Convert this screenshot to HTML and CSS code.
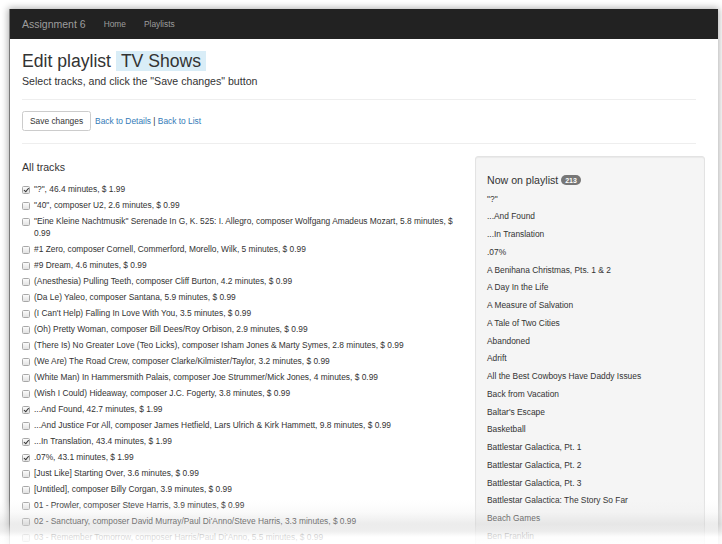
FILE: index.html
```html
<!DOCTYPE html>
<html>
<head>
<meta charset="utf-8">
<title>Edit playlist</title>
<link rel="stylesheet" href="styles.css">
</head>
<body>
<div class="frame">
  <nav class="navbar">
    <span class="brand">Assignment 6</span>
    <a class="nav-link" href="#">Home</a>
    <a class="nav-link" href="#">Playlists</a>
  </nav>
  <div class="container">
    <h2 class="title">Edit playlist <span class="hl">TV Shows</span></h2>
    <p class="sub">Select tracks, and click the "Save changes" button</p>
    <hr class="rule">
    <div class="actions">
      <button class="btn" type="button">Save changes</button>
      <span class="links"><a href="#">Back to Details</a> | <a href="#">Back to List</a></span>
    </div>
    <hr class="rule">
    <div class="row">
      <div class="col-main">
        <h4 class="heading">All tracks</h4>
        <ul class="tracks">
          <li><span class="cb checked"></span><span class="t">"?", 46.4 minutes, $ 1.99</span></li>
          <li><span class="cb"></span><span class="t">"40", composer U2, 2.6 minutes, $ 0.99</span></li>
          <li><span class="cb"></span><span class="t">"Eine Kleine Nachtmusik" Serenade In G, K. 525: I. Allegro, composer Wolfgang Amadeus Mozart, 5.8 minutes, $ 0.99</span></li>
          <li><span class="cb"></span><span class="t">#1 Zero, composer Cornell, Commerford, Morello, Wilk, 5 minutes, $ 0.99</span></li>
          <li><span class="cb"></span><span class="t">#9 Dream, 4.6 minutes, $ 0.99</span></li>
          <li><span class="cb"></span><span class="t">(Anesthesia) Pulling Teeth, composer Cliff Burton, 4.2 minutes, $ 0.99</span></li>
          <li><span class="cb"></span><span class="t">(Da Le) Yaleo, composer Santana, 5.9 minutes, $ 0.99</span></li>
          <li><span class="cb"></span><span class="t">(I Can't Help) Falling In Love With You, 3.5 minutes, $ 0.99</span></li>
          <li><span class="cb"></span><span class="t">(Oh) Pretty Woman, composer Bill Dees/Roy Orbison, 2.9 minutes, $ 0.99</span></li>
          <li><span class="cb"></span><span class="t">(There Is) No Greater Love (Teo Licks), composer Isham Jones &amp; Marty Symes, 2.8 minutes, $ 0.99</span></li>
          <li><span class="cb"></span><span class="t">(We Are) The Road Crew, composer Clarke/Kilmister/Taylor, 3.2 minutes, $ 0.99</span></li>
          <li><span class="cb"></span><span class="t">(White Man) In Hammersmith Palais, composer Joe Strummer/Mick Jones, 4 minutes, $ 0.99</span></li>
          <li><span class="cb"></span><span class="t">(Wish I Could) Hideaway, composer J.C. Fogerty, 3.8 minutes, $ 0.99</span></li>
          <li><span class="cb checked"></span><span class="t">...And Found, 42.7 minutes, $ 1.99</span></li>
          <li><span class="cb"></span><span class="t">...And Justice For All, composer James Hetfield, Lars Ulrich &amp; Kirk Hammett, 9.8 minutes, $ 0.99</span></li>
          <li><span class="cb checked"></span><span class="t">...In Translation, 43.4 minutes, $ 1.99</span></li>
          <li><span class="cb checked"></span><span class="t">.07%, 43.1 minutes, $ 1.99</span></li>
          <li><span class="cb"></span><span class="t">[Just Like] Starting Over, 3.6 minutes, $ 0.99</span></li>
          <li><span class="cb"></span><span class="t">[Untitled], composer Billy Corgan, 3.9 minutes, $ 0.99</span></li>
          <li><span class="cb"></span><span class="t">01 - Prowler, composer Steve Harris, 3.9 minutes, $ 0.99</span></li>
          <li><span class="cb"></span><span class="t">02 - Sanctuary, composer David Murray/Paul Di'Anno/Steve Harris, 3.3 minutes, $ 0.99</span></li>
          <li><span class="cb"></span><span class="t">03 - Remember Tomorrow, composer Harris/Paul Di'Anno, 5.5 minutes, $ 0.99</span></li>
        </ul>
      </div>
      <div class="well">
        <h4 class="heading">Now on playlist <span class="badge">213</span></h4>
        <ul class="plist">
          <li>"?"</li>
          <li>...And Found</li>
          <li>...In Translation</li>
          <li>.07%</li>
          <li>A Benihana Christmas, Pts. 1 &amp; 2</li>
          <li>A Day In the Life</li>
          <li>A Measure of Salvation</li>
          <li>A Tale of Two Cities</li>
          <li>Abandoned</li>
          <li>Adrift</li>
          <li>All the Best Cowboys Have Daddy Issues</li>
          <li>Back from Vacation</li>
          <li>Baltar's Escape</li>
          <li>Basketball</li>
          <li>Battlestar Galactica, Pt. 1</li>
          <li>Battlestar Galactica, Pt. 2</li>
          <li>Battlestar Galactica, Pt. 3</li>
          <li>Battlestar Galactica: The Story So Far</li>
          <li>Beach Games</li>
          <li>Ben Franklin</li>
        </ul>
      </div>
    </div>
  </div>
</div>
<div class="fade"></div>
</body>
</html>
```

FILE: styles.css
```css
html, body {
  margin: 0;
  padding: 0;
  background: #ffffff;
  overflow: hidden;
  height: 544px;
}

body {
  font-family: "Liberation Sans", Arial, sans-serif;
  font-size: 8.4px;
  color: #333333;
  position: relative;
}

.frame {
  margin: 9px 0 0 9px;
  width: 709px;
  height: 560px;
  background: #ffffff;
  overflow: hidden;
  border-left: 1px solid #7a7a7a;
  box-sizing: border-box;
  box-shadow: 0 0 7px 1px rgba(0, 0, 0, 0.32);
}

.navbar {
  display: flex;
  align-items: center;
  height: 30px;
  background: #222222;
  padding-left: 12px;
}

.brand {
  font-size: 10.5px;
  line-height: 30px;
  color: #9d9d9d;
  padding-right: 9px;
}

.nav-link {
  font-size: 8.4px;
  line-height: 30px;
  color: #9d9d9d;
  text-decoration: none;
  padding: 0 9px;
}

.container {
  padding: 0 22px 0 12px;
}

.title {
  margin: 12.5px 0 0;
  font-size: 17.6px;
  line-height: 19.4px;
  font-weight: 400;
  color: #333333;
}

.hl {
  background: #d9edf7;
  padding: 0 5px;
}

.sub {
  margin: 4px 0 0;
  font-size: 10.6px;
  line-height: 12px;
}

.rule {
  border: 0;
  border-top: 1px solid #eeeeee;
  margin: 12px 0 11px;
  height: 0;
}

.actions {
  display: flex;
  align-items: center;
  gap: 4px;
}

.btn {
  font-family: "Liberation Sans", Arial, sans-serif;
  font-size: 8.4px;
  line-height: 10px;
  color: #333333;
  background: #ffffff;
  border: 1px solid #cccccc;
  border-radius: 2.5px;
  padding: 4px 7px;
  margin: 0;
}

.links {
  color: #333333;
  line-height: 12px;
}

.links a {
  color: #337ab7;
  text-decoration: none;
}

.actions + .rule {
  margin-top: 12px;
  margin-bottom: 12px;
}

.row {
  display: flex;
  gap: 10px;
  margin-right: -9px;
  align-items: flex-start;
}

.col-main {
  flex: 1;
  min-width: 0;
}

.heading {
  margin: 5px 0 0;
  font-size: 10.6px;
  line-height: 12px;
  font-weight: 400;
  color: #333333;
}

.tracks {
  list-style: none;
  margin: 11.5px 0 0;
  padding: 0;
}

.tracks li {
  display: flex;
  align-items: flex-start;
  line-height: 11.5px;
  margin-bottom: 4.5px;
}

.cb {
  flex: none;
  width: 6px;
  height: 6px;
  margin: 1.75px 4px 0 0;
  border: 1px solid #a8a8a8;
  border-radius: 1.5px;
  background: linear-gradient(#fbfbfb, #e2e2e2);
  position: relative;
}

.cb.checked::after {
  content: "";
  position: absolute;
  left: 1.5px;
  top: 0px;
  width: 2px;
  height: 3.5px;
  border: solid #333333;
  border-width: 0 1.3px 1.3px 0;
  transform: rotate(40deg);
}

.t {
  flex: 1;
}

.well {
  flex: none;
  width: 230px;
  box-sizing: border-box;
  min-height: 420px;
  background: #f5f5f5;
  border: 1px solid #e3e3e3;
  border-radius: 3px;
  box-shadow: inset 0 1px 1px rgba(0, 0, 0, 0.05);
  padding: 11px 12px 11px 11px;
}

.well .heading {
  margin-top: 6px;
}

.badge {
  display: inline-block;
  font-size: 7px;
  font-weight: 700;
  line-height: 7px;
  color: #ffffff;
  background: #777777;
  border-radius: 5px;
  padding: 1.5px 4px;
  vertical-align: 1px;
}

.plist {
  list-style: none;
  margin: 4.7px 0 0;
  padding: 0;
}

.plist li {
  line-height: 17.75px;
}

.fade {
  position: absolute;
  left: 0;
  top: 500px;
  width: 722px;
  height: 44px;
  background: linear-gradient(to bottom,
    rgba(255, 255, 255, 0) 0px,
    rgba(236, 236, 236, 0.25) 12px,
    rgba(210, 210, 210, 0.42) 24px,
    rgba(232, 232, 232, 0.72) 31px,
    rgba(255, 255, 255, 0.82) 37px,
    rgba(255, 255, 255, 0.88) 44px);
}
```
